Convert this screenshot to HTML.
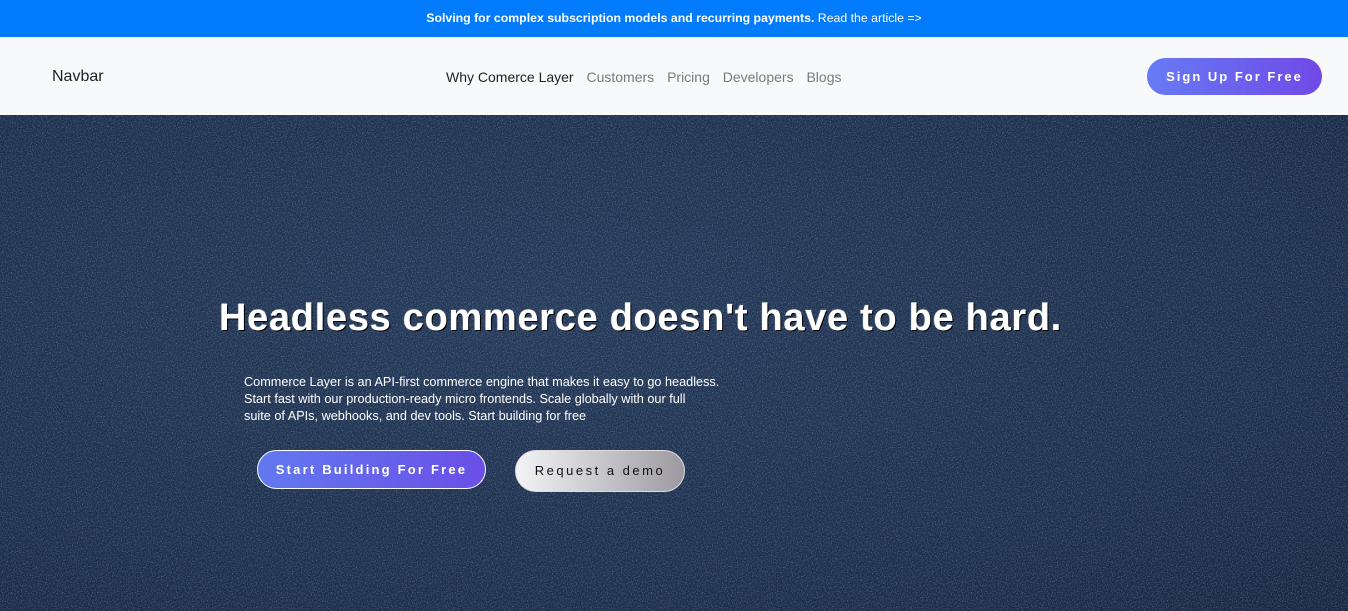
<!DOCTYPE html>
<html><head><meta charset="utf-8"><style>
*{margin:0;padding:0;box-sizing:border-box}
body{width:1348px;height:611px;overflow:hidden;font-family:"Liberation Sans",sans-serif;background:#1c2c45}
.top{height:37px;background:#037bfd;color:#fff;font-size:12.3px;text-align:center;line-height:37px}
.top b{font-weight:700}
nav{height:78px;background:#f8f9fb;position:relative}
.brand{position:absolute;left:52px;top:31px;font-size:16px;color:#222}
.links{position:absolute;left:446px;top:32px;font-size:14px;color:#7a7a7a}
.links span{margin-right:9px}
.links .a{color:#222}
.su{position:absolute;left:1147px;top:21px;width:175px;height:37px;border-radius:19px;background:linear-gradient(90deg,#667bf5,#7049e6);color:#fff;font-size:13px;font-weight:700;letter-spacing:2px;text-align:center;line-height:37px}
.hero{position:absolute;top:115px;left:0;width:1348px;height:496px;background:radial-gradient(ellipse at 40% 40%,#253858,#1b2d49 70%,#15233c)}
.hero svg{position:absolute;left:0;top:0}
h1{position:absolute;left:219px;top:182px;font-size:38px;font-weight:700;color:#fff;letter-spacing:0.7px;white-space:nowrap;text-shadow:1px 1px 0 #000,0 0 1px #fff}
p{position:absolute;left:244px;top:259px;width:480px;font-size:12.7px;line-height:17px;color:#fff}
.b1{position:absolute;left:257px;top:335px;width:229px;height:39px;border-radius:20px;border:1px solid #fff;background:linear-gradient(90deg,#6279f0,#6a4fe6);color:#fff;font-size:13px;font-weight:700;letter-spacing:2.2px;text-align:center;line-height:37px}
.b2{position:absolute;left:515px;top:335px;width:170px;height:42px;border-radius:21px;border:1px solid #ddd;background:linear-gradient(90deg,#f4f4f8,#9c9aa0);color:#111;font-size:13px;letter-spacing:2.5px;text-align:center;line-height:40px}
</style></head><body>
<div class="top"><b>Solving for complex subscription models and recurring payments.</b> Read the article =&gt;</div>
<nav><div class="brand">Navbar</div>
<div class="links"><span class="a">Why Comerce Layer</span> <span>Customers</span> <span>Pricing</span> <span>Developers</span> <span>Blogs</span></div>
<div class="su">Sign Up For Free</div></nav>
<div class="hero">
<svg width="1348" height="496"><filter id="n"><feTurbulence type="fractalNoise" baseFrequency="0.8" numOctaves="3" seed="3"/><feColorMatrix values="0 0 0 0 0.45 0 0 0 0 0.6 0 0 0 0 0.85 0 0 0 1.8 -0.8"/></filter><filter id="d"><feTurbulence type="fractalNoise" baseFrequency="0.6" numOctaves="2" seed="8"/><feColorMatrix values="0 0 0 0 0.02 0 0 0 0 0.05 0 0 0 0 0.1 0 0 0 1.8 -0.75"/></filter><rect width="1348" height="496" filter="url(#n)" opacity="0.5"/><rect width="1348" height="496" filter="url(#d)" opacity="0.7"/></svg>
<h1>Headless commerce doesn't have to be hard.</h1>
<p>Commerce Layer is an API-first commerce engine that makes it easy to go headless.<br>Start fast with our production-ready micro frontends. Scale globally with our full<br>suite of APIs, webhooks, and dev tools. Start building for free</p>
<div class="b1">Start Building For Free</div>
<div class="b2">Request a demo</div>
</div>
</body></html>
